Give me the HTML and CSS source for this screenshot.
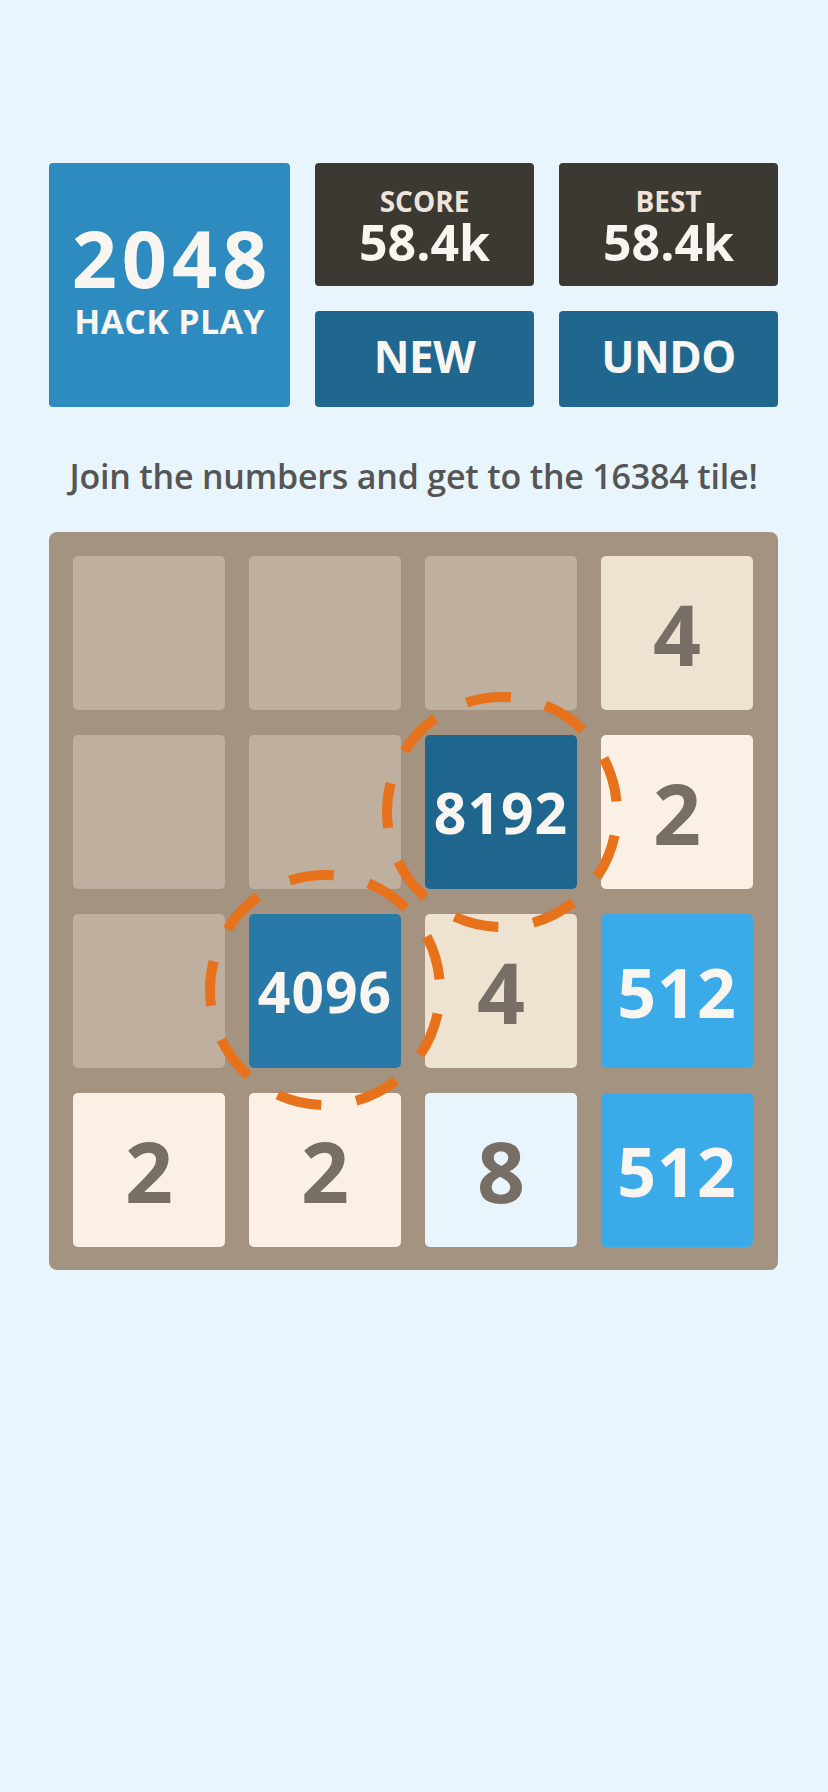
FILE: index.html
```html
<!DOCTYPE html>
<html lang="en">
<head>
<meta charset="utf-8">
<title>2048 Hack Play</title>
<link rel="stylesheet" href="styles.css">
</head>
<body>
<main class="page">
  <header class="top">
    <div class="logo">
      <div class="logo-num">2048</div>
      <div class="logo-sub">HACK PLAY</div>
    </div>
    <div class="stat">
      <div class="stat-label">SCORE</div>
      <div class="stat-value">58.4k</div>
    </div>
    <div class="stat">
      <div class="stat-label">BEST</div>
      <div class="stat-value">58.4k</div>
    </div>
    <button class="btn">NEW</button>
    <button class="btn">UNDO</button>
  </header>

  <p class="intro">Join the numbers and get to the 16384 tile!</p>

  <section class="board">
    <div class="tile empty"></div>
    <div class="tile empty"></div>
    <div class="tile empty"></div>
    <div class="tile t4">4</div>

    <div class="tile empty"></div>
    <div class="tile empty"></div>
    <div class="tile t8192">8192</div>
    <div class="tile t2">2</div>

    <div class="tile empty"></div>
    <div class="tile t4096">4096</div>
    <div class="tile t4">4</div>
    <div class="tile t512">512</div>

    <div class="tile t2">2</div>
    <div class="tile t2">2</div>
    <div class="tile t8">8</div>
    <div class="tile t512">512</div>

    <svg class="marks" width="729" height="738" viewBox="0 0 729 738" aria-hidden="true">
      <circle class="ring" cx="453" cy="280" r="115"/>
      <circle class="ring" cx="276" cy="458" r="115"/>
    </svg>
  </section>
</main>
</body>
</html>
```

FILE: styles.css
```css
html, body {
  margin: 0;
  padding: 0;
}

body {
  background: #e8f5fd;
  font-family: "Open Sans", "Noto Sans", "Liberation Sans", sans-serif;
  min-height: 1792px;
}

.page {
  width: 729px;
  padding: 163px 0 0 49px;
}

.top {
  display: grid;
  grid-template-columns: 241px 1fr 1fr;
  grid-template-rows: 123px 96px;
  column-gap: 25px;
  row-gap: 25px;
}

.logo {
  grid-row: 1 / span 2;
  background: #2d8bc0;
  border-radius: 4px;
  color: #f9f6f2;
  display: flex;
  flex-direction: column;
  align-items: center;
  padding-top: 52px;
  box-sizing: border-box;
}

.logo-num {
  font-size: 79px;
  font-weight: 700;
  line-height: 86px;
  letter-spacing: 5px;
  margin-left: 5px;
}

.logo-sub {
  font-size: 34px;
  font-weight: 700;
  line-height: 40px;
  letter-spacing: 0.3px;
}

.stat {
  background: #3b3932;
  border-radius: 4px;
  display: flex;
  flex-direction: column;
  align-items: center;
  padding-top: 23px;
  box-sizing: border-box;
}

.stat-label {
  color: #eee4da;
  font-size: 28px;
  font-weight: 700;
  line-height: 30px;
}

.stat-value {
  color: #f9f6f2;
  font-size: 50px;
  font-weight: 700;
  line-height: 52px;
}

.btn {
  background: #20678f;
  border: none;
  border-radius: 4px;
  color: #f9f6f2;
  font-family: inherit;
  font-size: 44px;
  font-weight: 700;
  letter-spacing: -0.5px;
  padding: 0 0 6px;
  margin: 0;
}

.intro {
  margin: 44px 0 31px;
  text-align: center;
  color: #555555;
  font-size: 34px;
  font-weight: 600;
  line-height: 50px;
  letter-spacing: -0.2px;
}

.board {
  position: relative;
  background: #a49381;
  border-radius: 8px;
  display: grid;
  grid-template-columns: repeat(4, 152px);
  grid-auto-rows: 154px;
  column-gap: 24px;
  row-gap: 25px;
  padding: 24px 24px 23px 24px;
  width: 729px;
  box-sizing: border-box;
}

.tile {
  border-radius: 5px;
  display: flex;
  align-items: center;
  justify-content: center;
  font-weight: 700;
  color: #776e65;
  font-size: 84px;
}

.empty { background: #bfaf9f; }
.t2 { background: #faf1e4; }
.t4 { background: #eee2d0; }
.t8 { background: #e8f5fd; }
.t512 { background: #3aaae8; color: #f9f6f2; font-size: 68px; letter-spacing: 1px; }
.t4096 { background: #2878a8; color: #f9f6f2; font-size: 57px; letter-spacing: 1px; }
.t8192 { background: #1f668f; color: #f9f6f2; font-size: 57px; letter-spacing: 1px; }

.marks {
  position: absolute;
  left: 0;
  top: 0;
  pointer-events: none;
  overflow: visible;
}

.ring {
  fill: none;
  stroke: #e8711c;
  stroke-width: 10;
  stroke-dasharray: 45 35.29;
  stroke-dashoffset: -23.7;
}
```
